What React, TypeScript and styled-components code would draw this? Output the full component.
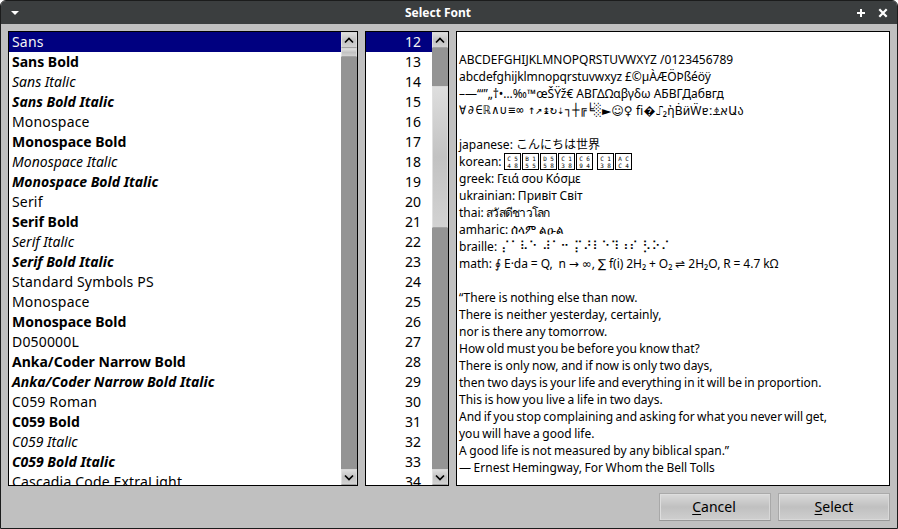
import React from "react";
import styled, { createGlobalStyle, css } from "styled-components";

const GlobalStyle = createGlobalStyle`
  * { box-sizing: border-box; }
  body { margin: 0; background: #fff; font-family: "Noto Sans", "DejaVu Sans", "Noto Sans CJK JP", sans-serif; color: #000; }
`;

const Window = styled.div`
  width: 898px;
  height: 529px;
  display: flex;
  flex-direction: column;
  border: 1px solid #1b1c1c;
  border-radius: 6px 6px 0 0;
  background: #c0c0c0;
  overflow: hidden;
`;

const TitleBar = styled.header`
  height: 23px;
  flex: none;
  display: grid;
  grid-template-columns: 38px 1fr 60px;
  align-items: center;
  background: #3b3e3f;
  color: #fff;
  padding: 1px 9px 0 9px;
`;

const Title = styled.div`
  text-align: center;
  font-size: 12px;
  font-weight: 700;
  line-height: 22px;
`;

const Controls = styled.div<{ $end?: boolean }>`
  display: flex;
  gap: 12px;
  justify-content: ${(p) => (p.$end ? "flex-end" : "flex-start")};
  svg { display: block; }
`;

const Body = styled.main`
  flex: 1;
  padding: 7px 7px 8px;
  display: flex;
  flex-direction: column;
  gap: 7px;
`;

const Panels = styled.div`
  display: grid;
  grid-template-columns: 350px 84px 434px;
  gap: 7px;
  height: 455px;
`;

const Panel = styled.section`
  border: 1px solid #000;
  background: #fff;
  display: flex;
  overflow: hidden;
`;

const List = styled.div`
  flex: 1;
  overflow: hidden;
`;

const Row = styled.div<{ $selected?: boolean; $bold?: boolean; $italic?: boolean; $right?: boolean }>`
  height: 20px;
  line-height: 20px;
  font-size: 14px;
  white-space: pre;
  padding: 0 11px 0 3px;
  font-weight: ${(p) => (p.$bold ? 700 : 400)};
  font-style: ${(p) => (p.$italic ? "italic" : "normal")};
  text-align: ${(p) => (p.$right ? "right" : "left")};
  letter-spacing: ${(p) => (p.$bold || p.$italic || p.$right ? 0 : 0.17)}px;
  ${(p) => p.$selected && css`
    background: #000080;
    color: #f4f4f4;
  `}
`;

const raised = css`
  border: 1px solid;
  border-color: #d6d6d6 #d9d9d9 #a3a3a3 #e0e0e0;
  background: linear-gradient(#dedede, #c2c2c2 50%, #d2d2d2);
`;

const ScrollBar = styled.div`
  width: 16px;
  flex: none;
  display: flex;
  flex-direction: column;
  background: #949494;
`;

const ScrollButton = styled.div`
  ${raised}
  height: 16px;
  display: grid;
  place-items: center;
  svg { display: block; }
`;

const Track = styled.div<{ $offset: number }>`
  flex: 1;
  padding-top: ${(p) => p.$offset}px;
`;

const Thumb = styled.div<{ $size: number }>`
  ${raised}
  height: ${(p) => p.$size}px;
`;

const Preview = styled.div`
  padding: 19px 0 0 2px;
  font-size: 12px;
  line-height: 17px;
`;

const Line = styled.div<{ $gap?: number; $tracking?: number }>`
  height: 17px;
  white-space: pre;
  display: flex;
  word-spacing: ${(p) => p.$gap ?? 0}px;
  letter-spacing: ${(p) => p.$tracking ?? 0}px;
`;

const Run = styled.span<{ $width?: number; $spacing?: number; $family?: string }>`
  flex: none;
  width: ${(p) => (p.$width ? `${p.$width}px` : "auto")};
  font-family: ${(p) => (p.$family ? `"${p.$family}", ` : "")}"Noto Sans", "DejaVu Sans", sans-serif;
  letter-spacing: ${(p) => p.$spacing ?? 0}px;
`;

const MissingGlyph = styled.span`
  width: 17px;
  height: 17px;
  margin-right: 1px;
  border: 1px solid #000;
  display: grid;
  grid-template-columns: 7px 7px;
  grid-template-rows: 7px 7px;
  justify-content: center;
  align-content: center;
  justify-items: center;
  font: 6px/7px "DejaVu Sans Mono", monospace;
`;

const Actions = styled.footer`
  display: flex;
  justify-content: flex-end;
  gap: 7px;
`;

const Button = styled.button<{ $nudge?: number }>`
  width: 112px;
  height: 28px;
  padding: 0 ${(p) => p.$nudge ?? 0}px 0 0;
  border: 1px solid;
  border-color: #aaa #a8a8a8 #989898 #a8a8a8;
  box-shadow: inset 1px 1px #dedede, inset -1px -1px #d8d8d8;
  background: linear-gradient(#dadada, #c0c0c0 50%, #cfcfcf);
  font: 14px/24px "Noto Sans", sans-serif;
  color: #000;
`;

const Mnemonic = styled.span`
  text-decoration: underline;
  text-decoration-thickness: 1px;
  text-underline-offset: 2px;
`;

const Chevron = ({ down }: { down?: boolean }) => (
  <svg width="10" height="7" viewBox="0 0 10 7" fill="none" stroke="#000" strokeWidth="1.7">
    <path d={down ? "M1 1.5L5 5.5L9 1.5" : "M1 5.5L5 1.5L9 5.5"} />
  </svg>
);

const Bar = ({ offset, size }: { offset: number; size: number }) => (
  <ScrollBar>
    <ScrollButton><Chevron /></ScrollButton>
    <Track $offset={offset}><Thumb $size={size} /></Track>
    <ScrollButton><Chevron down /></ScrollButton>
  </ScrollBar>
);

const fonts = [
  "Sans", "Sans Bold", "Sans Italic", "Sans Bold Italic",
  "Monospace", "Monospace Bold", "Monospace Italic", "Monospace Bold Italic",
  "Serif", "Serif Bold", "Serif Italic", "Serif Bold Italic",
  "Standard Symbols PS", "Monospace", "Monospace Bold", "D050000L",
  "Anka/Coder Narrow Bold", "Anka/Coder Narrow Bold Italic",
  "C059 Roman", "C059 Bold", "C059 Italic", "C059 Bold Italic",
  "Cascadia Code ExtraLight",
];

const sizes = Array.from({ length: 23 }, (_, i) => i + 12);

const Symbols = () => (
  <Line>
    <Run $family="DejaVu Sans Mono" $spacing={0.95} $width={69}>∀∂∈ℝ∧∪≡∞</Run>
    <Run $family="DejaVu Sans Mono" $width={37}>↑↗↨↻⇣</Run>
    <Run $family="DejaVu Sans Mono" $width={37}>┐┼╔╘░</Run>
    <Run $width={34}>►☺♀</Run>
    <Run $spacing={0.2}>ﬁ�⑀₂ἠḂӥẄɐː⍎אԱა</Run>
  </Line>
);

const Korean = () => (
  <Line>
    <Run $width={45}>korean:</Run>
    {["C548", "B155", "D558", "C138", "C694", " ", "C138", "ACC4"].map((code, i) =>
      code === " " ? <span key={i}> </span> : (
        <MissingGlyph key={i}>{code.split("").map((c, j) => <span key={j}>{c}</span>)}</MissingGlyph>
      ),
    )}
  </Line>
);

const Labelled = ({ label, width, text, spacing, family }: {
  label: string; width: number; text: string; spacing?: number; family?: string;
}) => (
  <Line>
    <Run $width={width}>{label}</Run>
    <Run $family={family} $spacing={spacing}>{text}</Run>
  </Line>
);

const quote: [string, number?][] = [
  ["math: ∮ E·da = Q,  n → ∞, ∑ f(i) 2H₂ + O₂ ⇌ 2H₂O, R = 4.7 kΩ", -0.22],
  [""],
  ["“There is nothing else than now.", -0.4],
  ["There is neither yesterday, certainly,", -0.1],
  ["nor is there any tomorrow.", -0.5],
  ["How old must you be before you know that?", -0.88],
  ["There is only now, and if now is only two days,", -0.5],
  ["then two days is your life and everything in it will be in proportion.", -0.77],
  ["This is how you live a life in two days.", -0.5],
  ["And if you stop complaining and asking for what you never will get,", -0.83],
  ["you will have a good life.", -0.6],
  ["A good life is not measured by any biblical span.”", -0.5],
  ["— Ernest Hemingway, For Whom the Bell Tolls", -0.5],
];

export default function App() {
  return (
    <>
      <GlobalStyle />
      <Window>
        <TitleBar>
          <Controls>
            <svg width="10" height="6" viewBox="0 0 10 6"><path d="M1 1H9L5 5Z" fill="#fff" /></svg>
          </Controls>
          <Title>Select Font</Title>
          <Controls $end>
            <svg width="10" height="10" viewBox="0 0 10 10" stroke="#fff" strokeWidth="2"><path d="M5 1V9M1 5H9" /></svg>
            <svg width="10" height="10" viewBox="0 0 10 10" stroke="#fff" strokeWidth="2.2"><path d="M1.3 1.3L8.7 8.7M8.7 1.3L1.3 8.7" /></svg>
          </Controls>
        </TitleBar>
        <Body>
          <Panels>
            <Panel>
              <List>
                {fonts.map((name, i) => (
                  <Row key={i} $selected={i === 0} $bold={name.includes("Bold")} $italic={name.includes("Italic")}>{name}</Row>
                ))}
              </List>
              <Bar offset={0} size={9} />
            </Panel>
            <Panel>
              <List>
                {sizes.map((n) => <Row key={n} $selected={n === 12} $right>{n}</Row>)}
              </List>
              <Bar offset={38} size={142} />
            </Panel>
            <Panel>
              <Preview>
                <Line>ABCDEFGHIJKLMNOPQRSTUVWXYZ /0123456789</Line>
                <Line $tracking={-0.09}>abcdefghijklmnopqrstuvwxyz £©µÀÆÖÞßéöÿ</Line>
                <Line>–—‘“”„†•…‰™œŠŸž€ ΑΒΓΔΩαβγδω АБВГДабвгд</Line>
                <Symbols />
                <Line />
                <Line>japanese: こんにちは世界</Line>
                <Korean />
                <Line $gap={-0.5}>greek: Γειά σου Κόσμε</Line>
                <Line $gap={-0.5}>ukrainian: Привіт Світ</Line>
                <Labelled label="thai:" width={27} text="สวัสดีชาวโลก" spacing={-0.75} />
                <Labelled label="amharic:" width={52} text="ሰላም ልዑል" spacing={-0.1} />
                <Labelled label="braille:" width={42} text="⡌⠁⠧⠑ ⠼⠁⠒ ⡍⠜⠇⠑⠹⠰⠎ ⡣⠕⠌" spacing={0.4} family="DejaVu Sans" />
                {quote.map(([text, gap], i) => <Line key={i} $gap={gap}>{text}</Line>)}
              </Preview>
            </Panel>
          </Panels>
          <Actions>
            <Button $nudge={2}><Mnemonic>C</Mnemonic>ancel</Button>
            <Button><Mnemonic>S</Mnemonic>elect</Button>
          </Actions>
        </Body>
      </Window>
    </>
  );
}
